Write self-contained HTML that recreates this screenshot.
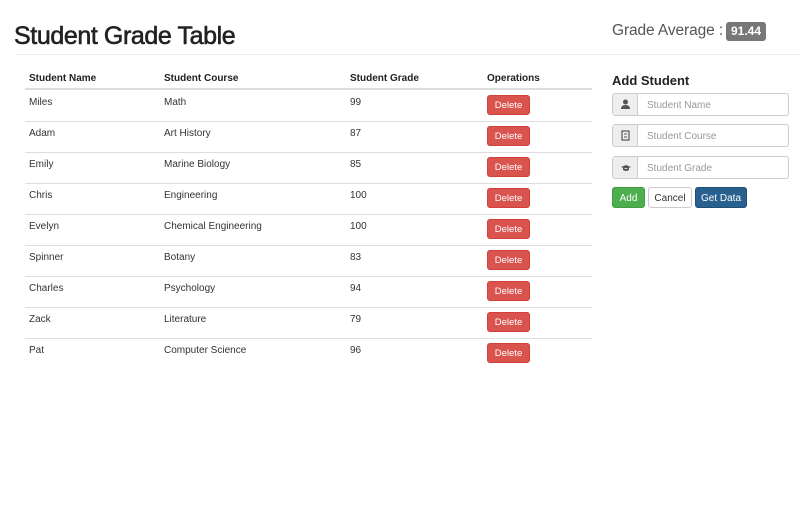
<!DOCTYPE html>
<html><head><style>
*{box-sizing:border-box;margin:0;padding:0}
body{width:800px;height:532px;background:#fff;font-family:"Liberation Sans",sans-serif;color:#333;position:relative;overflow:hidden}
.a{position:absolute}
h1{position:absolute;left:14px;top:22px;font-size:25px;font-weight:normal;-webkit-text-stroke:0.6px #222;color:#222;letter-spacing:-0.4px}
.hr{position:absolute;left:15px;top:54px;width:785px;height:1px;background:#eee}
.ga{position:absolute;left:612px;top:22px;font-size:15.5px;color:#555;letter-spacing:-0.1px}
.badge{position:absolute;left:726px;top:22px;width:40px;height:19px;background:#777;color:#fff;border-radius:3px;font-size:12px;font-weight:bold;text-align:center;line-height:19px}
.th{position:absolute;top:73px;font-size:10px;font-weight:bold;color:#222}
.tl{position:absolute;left:25px;width:567px;height:1px;background:#ddd}
.td{position:absolute;font-size:10px;color:#333}
.del{position:absolute;left:487px;width:43px;height:20px;background:#d9534f;border:1px solid #d43f3a;border-radius:3px;color:#fff;font-size:9.5px;display:flex;align-items:center;justify-content:center;padding-top:1px}
.inp{position:absolute;left:612px;width:177px;height:23px;border:1px solid #ccc;border-radius:3px;font-size:10px;color:#999}
.inp .ad{position:absolute;left:0;top:0;width:25px;height:21px;background:#eee;border-right:1px solid #ccc}
.inp span{position:absolute;left:34px;top:6px}
.btn{position:absolute;top:187px;height:21px;border-radius:3px;font-size:10px;border:1px solid;display:flex;align-items:center;justify-content:center;padding-top:2px}
</style></head><body>
<h1>Student Grade Table</h1>
<div class="hr"></div>
<div class="ga">Grade Average :</div>
<div class="badge">91.44</div>
<div class="th" style="left:29px">Student Name</div>
<div class="th" style="left:164px">Student Course</div>
<div class="th" style="left:350px">Student Grade</div>
<div class="th" style="left:487px">Operations</div>
<div class="tl" style="top:88px;height:2px"></div>
<div id="rows"></div>
<script>
var d=[["Miles","Math",99],["Adam","Art History",87],["Emily","Marine Biology",85],["Chris","Engineering",100],["Evelyn","Chemical Engineering",100],["Spinner","Botany",83],["Charles","Psychology",94],["Zack","Literature",79],["Pat","Computer Science",96]];
var h="";d.forEach(function(r,i){var y=90+i*31;
h+='<div class="td" style="left:29px;top:'+(y+7)+'px">'+r[0]+'</div><div class="td" style="left:164px;top:'+(y+7)+'px">'+r[1]+'</div><div class="td" style="left:350px;top:'+(y+7)+'px">'+r[2]+'</div><div class="del" style="top:'+(y+5)+'px">Delete</div>'+(i<8?'<div class="tl" style="top:'+(y+31)+'px"></div>':'');});
document.getElementById("rows").innerHTML=h;
</script>
<div class="a" style="left:612px;top:73px;font-size:13px;font-weight:bold;color:#222">Add Student</div>
<div class="inp" style="top:93px"><div class="ad"><svg width="25" height="21"><circle cx="12.5" cy="8" r="2.5" fill="#555"/><path d="M8 15 Q8 11 12.5 11 Q17 11 17 15Z" fill="#555"/></svg></div><span>Student Name</span></div>
<div class="inp" style="top:124px"><div class="ad"><svg width="25" height="21"><rect x="9" y="6" width="7" height="9" fill="none" stroke="#555" stroke-width="1.2"/><line x1="11" y1="9" x2="14" y2="9" stroke="#555"/><line x1="11" y1="12" x2="14" y2="12" stroke="#555"/></svg></div><span>Student Course</span></div>
<div class="inp" style="top:156px"><div class="ad"><svg width="25" height="21"><path d="M8 10 L13 8 L18 10 L13 12Z M10 11 L10 13 Q13 15 16 13 L16 11" fill="#555"/></svg></div><span>Student Grade</span></div>
<div class="btn" style="left:612px;width:33px;background:#4cae4c;border-color:#449d44;color:#fff">Add</div>
<div class="btn" style="left:648px;width:44px;background:#fff;border-color:#ccc;color:#333">Cancel</div>
<div class="btn" style="left:695px;width:52px;background:#286090;border-color:#204d74;color:#fff">Get Data</div>
</body></html>
